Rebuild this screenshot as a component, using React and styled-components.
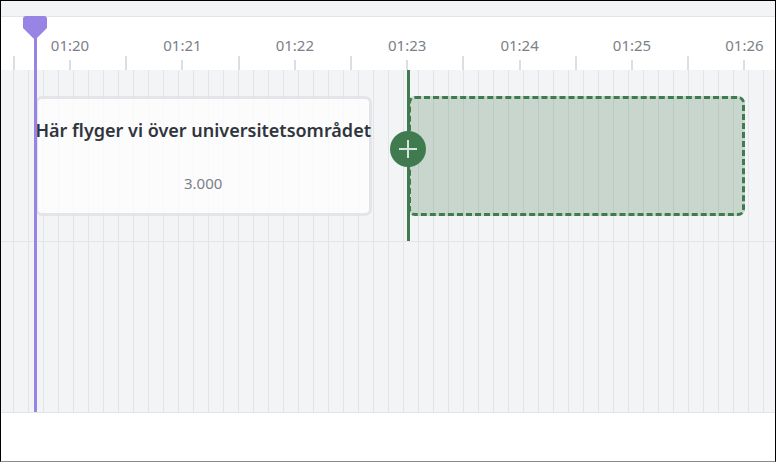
import React from "react";
import styled, { createGlobalStyle } from "styled-components";

const PX_PER_SEC = 112.4;
const ORIGIN_SEC = 80;
const ORIGIN_X = 69;

const toX = (sec) => ORIGIN_X + (sec - ORIGIN_SEC) * PX_PER_SEC;

const GlobalStyle = createGlobalStyle`
	html, body {
		margin: 0;
		padding: 0;
		background: #ffffff;
		overflow: hidden;
	}
	body {
		font-family: "Noto Sans", "Liberation Sans", sans-serif;
	}
`;

const Frame = styled.div`
	position: relative;
	width: 776px;
	height: 462px;
	box-sizing: border-box;
	border: 1px solid #000000;
	border-bottom-color: #8a8a8a;
	background: #ffffff;
	overflow: hidden;
	display: flex;
	flex-direction: column;
`;

const TopBar = styled.div`
	height: 15px;
	flex: none;
	background: #f3f4f6;
	border-bottom: 1px solid #e2e4e9;
`;

const Ruler = styled.div`
	position: relative;
	height: 53px;
	flex: none;
	background: #ffffff;
`;

const TimeLabel = styled.span`
	position: absolute;
	top: 18px;
	transform: translateX(-50%);
	font-size: 15px;
	line-height: 20px;
	color: #7c808a;
	white-space: nowrap;
`;

const Tick = styled.div`
	position: absolute;
	bottom: 0;
	width: 2px;
	margin-left: -1px;
	height: ${(p) => (p.$major ? 10 : 14)}px;
	background: #dcdee3;
`;

const Tracks = styled.div`
	flex: none;
	display: flex;
	flex-direction: column;
	background-color: #f3f4f6;
	background-image: repeating-linear-gradient(
		to right,
		transparent 0 12px,
		#e2e4e8 12px 13px,
		transparent 13px 15px
	);
`;

const Track = styled.div`
	position: relative;
	height: ${(p) => p.$height}px;
	border-bottom: 1px solid #e2e4e8;
`;

const Clip = styled.div`
	position: absolute;
	top: 26px;
	height: 120px;
	box-sizing: border-box;
	border-radius: 7px;
	display: flex;
	flex-direction: column;
	align-items: center;
`;

const TextClip = styled(Clip)`
	background: rgba(255, 255, 255, 0.72);
	border: 3px solid #e4e5e8;
	padding-top: 19px;
`;

const DropZone = styled(Clip)`
	background: rgba(63, 123, 79, 0.24);
	border: 3px dashed #3f7b4f;
`;

const ClipTitle = styled.div`
	font-size: 18px;
	line-height: 25px;
	font-weight: 600;
	color: #30353d;
	white-space: nowrap;
`;

const ClipValue = styled.div`
	margin-top: 30px;
	font-size: 15px;
	line-height: 20px;
	color: #7b7f88;
`;

const InsertLine = styled.div`
	position: absolute;
	top: 0;
	bottom: 0;
	width: 3px;
	margin-left: -1px;
	background: #3f7b4f;
`;

const AddButton = styled.button`
	position: absolute;
	top: 61px;
	width: 36px;
	height: 36px;
	margin-left: -18px;
	padding: 0;
	border: none;
	border-radius: 50%;
	background: #3f7b4f;
	display: flex;
	align-items: center;
	justify-content: center;
	cursor: pointer;
`;

const Playhead = styled.div`
	position: absolute;
	top: 15px;
	height: 396px;
	width: 24px;
	margin-left: -12px;
	display: flex;
	flex-direction: column;
	align-items: center;
	pointer-events: none;
`;

const PlayheadLine = styled.div`
	flex: 1;
	width: 3px;
	margin-top: -1px;
	background: #9784e4;
`;

const HandleIcon = () => (
	<svg width="24" height="23" viewBox="0 0 24 23" style={{ display: "block" }}>
		<path d="M3 0H21Q24 0 24 3V12L13.5 22.5H10.5L0 12V3Q0 0 3 0Z" fill="#9784e4" />
	</svg>
);

const PlusIcon = () => (
	<svg width="20" height="20" viewBox="0 0 20 20">
		<path d="M10 1V19M1 10H19" stroke="#d6e4da" strokeWidth="2" />
	</svg>
);

const ticks = [];
for (let t = 79.5; t <= 86.01; t += 0.5) {
	ticks.push({ t, major: Number.isInteger(t) });
}

const labels = [80, 81, 82, 83, 84, 85, 86];

const fmt = (sec) => {
	const m = Math.floor(sec / 60);
	const s = sec % 60;
	return `${String(m).padStart(2, "0")}:${String(s).padStart(2, "0")}`;
};

const clip = { start: 79.685, duration: 3, title: "Här flyger vi över universitetsområdet" };
const drop = { start: 83.005, duration: 3 };
const playheadAt = 79.69;

export default function App() {
	return (
		<>
			<GlobalStyle />
			<Frame>
				<TopBar />
				<Ruler>
					{ticks.map((tk) => (
						<Tick key={tk.t} $major={tk.major} style={{ left: toX(tk.t) }} />
					))}
					{labels.map((sec) => (
						<TimeLabel key={sec} style={{ left: toX(sec) }}>
							{fmt(sec)}
						</TimeLabel>
					))}
				</Ruler>
				<Tracks>
					<Track $height={171}>
						<TextClip
							style={{
								left: toX(clip.start),
								width: clip.duration * PX_PER_SEC,
							}}
						>
							<ClipTitle>{clip.title}</ClipTitle>
							<ClipValue>{clip.duration.toFixed(3)}</ClipValue>
						</TextClip>
						<DropZone
							style={{
								left: toX(drop.start),
								width: drop.duration * PX_PER_SEC,
							}}
						/>
						<InsertLine style={{ left: toX(drop.start) }} />
						<AddButton style={{ left: toX(drop.start) + 0.5 }} aria-label="Lägg till">
							<PlusIcon />
						</AddButton>
					</Track>
					<Track $height={170} />
				</Tracks>
				<Playhead style={{ left: toX(playheadAt) }}>
					<HandleIcon />
					<PlayheadLine />
				</Playhead>
			</Frame>
		</>
	);
}
